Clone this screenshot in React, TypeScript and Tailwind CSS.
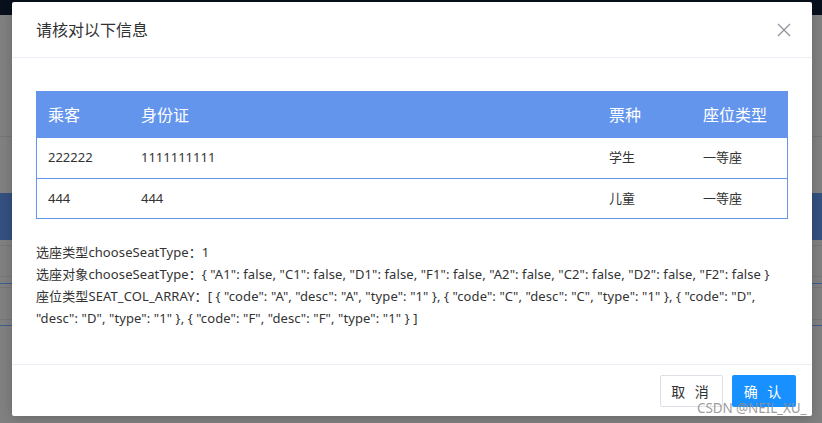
const font = { fontFamily: '"Noto Sans", "Noto Sans CJK SC", sans-serif' };

const rows = [
  { name: "222222", id: "1111111111", kind: "学生", seat: "一等座" },
  { name: "444", id: "444", kind: "儿童", seat: "一等座" },
];

function Backdrop() {
  return (
    <div className="flex h-[423px] w-[822px] flex-col bg-[#808080]">
      <div className="h-[15px] bg-[#07101c]" />
      <div className="h-[121px]" />
      <div className="h-px bg-[#757575]" />
      <div className="h-[56px]" />
      <div className="h-[47px] bg-[#33507f]" />
      <div className="h-[5px]" />
      <div className="h-px bg-[#777777]" />
      <div className="h-[30px]" />
      <div className="h-px bg-[#777777]" />
      <div className="h-[6px]" />
      <div className="h-px bg-[#3d5d8f]" />
      <div className="h-[3px]" />
      <div className="h-px bg-[#777777]" />
      <div className="h-[31px]" />
      <div className="h-px bg-[#777777]" />
      <div className="h-[5px]" />
      <div className="h-px bg-[#3d5d8f]" />
    </div>
  );
}

function CloseIcon() {
  return (
    <svg width="14" height="14" viewBox="0 0 14 14" className="text-[#909399]">
      <path d="M1 1L13 13M13 1L1 13" stroke="currentColor" strokeWidth="1.3" fill="none" />
    </svg>
  );
}

export default function App() {
  return (
    <div className="relative h-[423px] w-[822px] overflow-hidden" style={font}>
      <Backdrop />

      <div className="absolute left-[12px] top-[2px] flex h-[414px] w-[800px] flex-col rounded-[2px] bg-white shadow-[0_2px_12px_rgba(0,0,0,0.2)]">
        <div className="flex h-[56px] items-center justify-between border-b border-[#ebeef5] pl-[24px] pr-[21px]">
          <span className="text-[16px] text-[#303133]">请核对以下信息</span>
          <CloseIcon />
        </div>

        <div className="flex-1 px-[24px] pt-[33px]">
          <div className="border border-[#6495ed]">
            <div className="grid h-[46px] grid-cols-[93px_468px_94px_1fr] items-center bg-[#6495ed] text-[16px] text-white">
              <span className="pl-[11px]">乘客</span>
              <span className="pl-[11px]">身份证</span>
              <span className="pl-[11px]">票种</span>
              <span className="pl-[11px]">座位类型</span>
            </div>
            {rows.map((r, i) => (
              <div
                key={i}
                className={`grid h-[40px] grid-cols-[93px_468px_94px_1fr] items-center text-[13px] text-[#333] ${
                  i > 0 ? "border-t border-[#6495ed]" : ""
                }`}
              >
                <span className="pl-[11px]">{r.name}</span>
                <span className="pl-[11px]">{r.id}</span>
                <span className="pl-[11px]">{r.kind}</span>
                <span className="pl-[11px]">{r.seat}</span>
              </div>
            ))}
          </div>

          <div className="mt-[22px] text-[13px] leading-[22px] tracking-[0.1px] text-[#333]">
            <p>选座类型chooseSeatType：1</p>
            <p>
              选座对象chooseSeatType：{'{ "A1": false, "C1": false, "D1": false, "F1": false, "A2": false, "C2": false, "D2": false, "F2": false }'}
            </p>
            <p>
              座位类型SEAT_COL_ARRAY：{'[ { "code": "A", "desc": "A", "type": "1" }, { "code": "C", "desc": "C", "type": "1" }, { "code": "D",'}
              <br />
              {'"desc": "D", "type": "1" }, { "code": "F", "desc": "F", "type": "1" } ]'}
            </p>
          </div>
        </div>

        <div className="flex h-[52px] items-start justify-end gap-[9px] border-t border-[#ebeef5] pr-[16px] pt-[10px]">
          <button className="h-[32px] w-[63px] rounded-[2px] border border-[#dcdfe6] bg-white text-[14px] tracking-[3px] text-[#303133]">
            取 消
          </button>
          <button className="h-[32px] w-[64px] rounded-[2px] bg-[#1890ff] text-[14px] tracking-[3px] text-white">
            确 认
          </button>
        </div>
      </div>

      <div className="pointer-events-none absolute left-[697px] top-[398px] text-[13.5px] tracking-[-0.1px] text-[#8f8f8f]/90">
        CSDN @NEIL_XU_
      </div>
    </div>
  );
}
